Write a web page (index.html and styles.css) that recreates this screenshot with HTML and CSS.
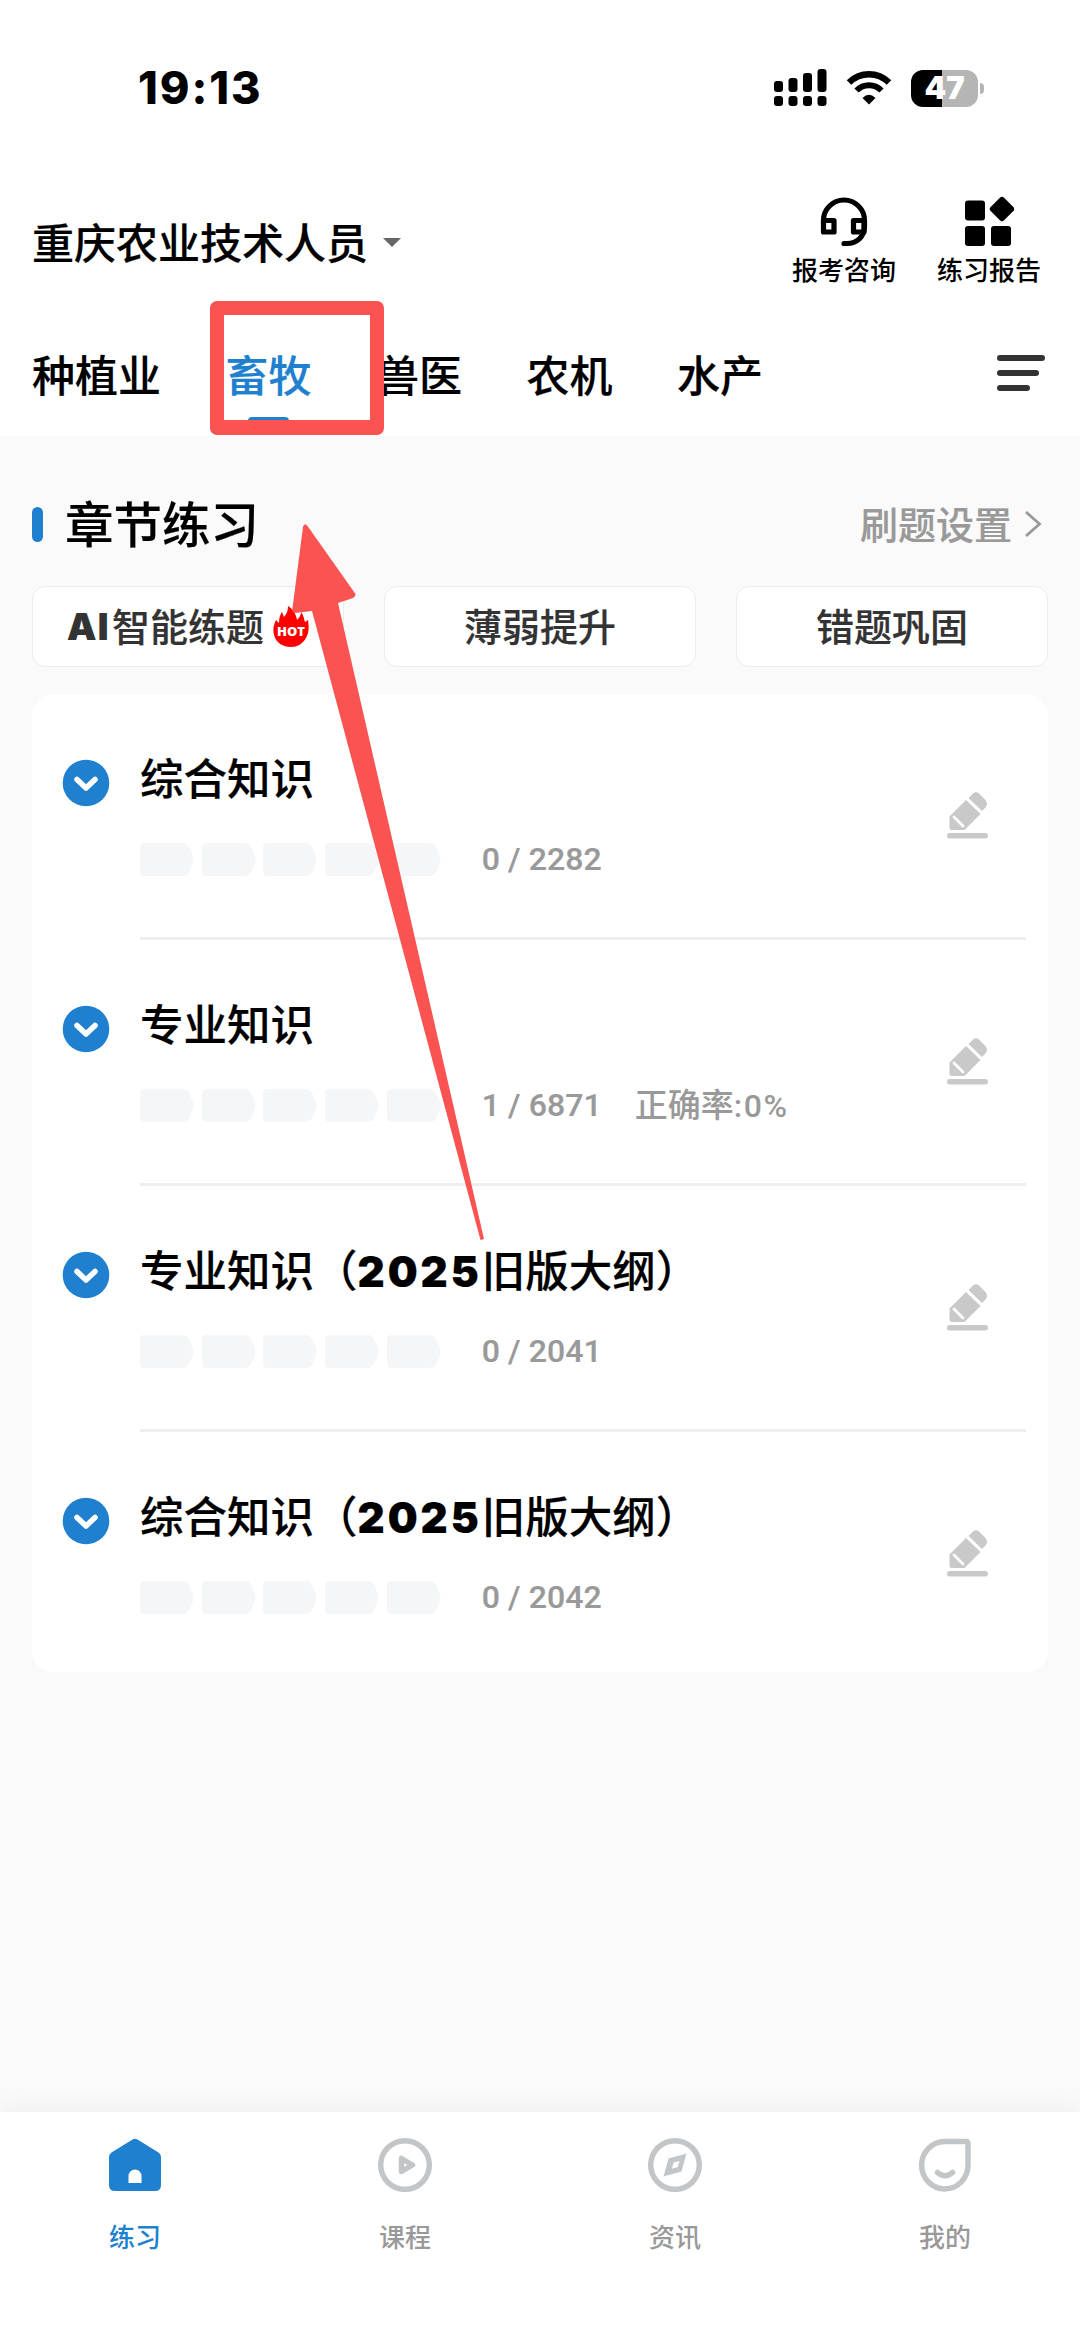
FILE: index.html
```html
<!DOCTYPE html>
<html lang="zh-CN">
<head>
    <meta charset="UTF-8">
    <title>章节练习</title>
    <link rel="stylesheet" href="styles.css">
</head>
<body>
    <div class="page">
        <header class="header">
            <div class="status-bar">
                <span class="time">19:13</span>
                <div class="status-icons">
                    <svg class="signal" width="54" height="38" viewBox="0 0 54 38">
                        <rect x="0" y="12" width="9" height="11" rx="3"/>
                        <rect x="14.5" y="9" width="9" height="14" rx="3"/>
                        <rect x="29" y="4" width="9" height="19" rx="3"/>
                        <rect x="43.5" y="0" width="9" height="23" rx="3"/>
                        <rect x="0" y="27" width="9" height="10" rx="3"/>
                        <rect x="14.5" y="27" width="9" height="10" rx="3"/>
                        <rect x="29" y="27" width="9" height="10" rx="3"/>
                        <rect x="43.5" y="27" width="9" height="10" rx="3"/>
                    </svg>
                    <svg class="wifi" width="46" height="36" viewBox="0 0 46 36">
                        <path d="M3 12.5C14.500 1.500 31.500 1.500 43 12.500" fill="none" stroke="#000" stroke-width="6.500"/>
                        <path d="M10.500 20.500C17.500 13.500 28.500 13.500 35.500 20.500" fill="none" stroke="#000" stroke-width="6"/>
                        <path d="M16.500 28Q23 21.500 29.500 28L23 34.500Z"/>
                    </svg>
                    <div class="battery"><span>47</span></div>
                    <div class="battery-tip"></div>
                </div>
            </div>

            <div class="title-bar">
                <div class="exam-name">重庆农业技术人员<i class="caret"></i></div>
                <div class="tools">
                    <div class="tool">
                        <svg width="50" height="52" viewBox="0 0 50 52" fill="none" stroke="#000">
                            <path d="M4.500 26V25.500a20.500 20.500 0 0 1 41 0V31c0 11-8 17.500-17.500 17.500H25" stroke-width="5.200" stroke-linecap="round"/>
                            <rect x="4.500" y="25.500" width="10.500" height="11.500" stroke-width="5.200" stroke-linejoin="round"/>
                            <rect x="34.500" y="25.500" width="10.500" height="11.500" stroke-width="5.200" stroke-linejoin="round"/>
                        </svg>
                        <span>报考咨询</span>
                    </div>
                    <div class="tool">
                        <svg width="50" height="52" viewBox="0 0 50 52">
                            <rect x="1" y="5.500" width="20" height="20" rx="3"/>
                            <rect x="1" y="31" width="20" height="20" rx="3"/>
                            <rect x="27" y="31" width="20" height="20" rx="3"/>
                            <rect x="28.500" y="4.500" width="19" height="19" rx="3" transform="rotate(45 38 14)"/>
                        </svg>
                        <span>练习报告</span>
                    </div>
                </div>
            </div>

            <nav class="tabs">
                <a class="tab">种植业</a>
                <a class="tab active">畜牧</a>
                <a class="tab">兽医</a>
                <a class="tab">农机</a>
                <a class="tab">水产</a>
                <div class="menu"><i></i><i></i><i></i></div>
            </nav>
        </header>

        <main class="content">
            <div class="section-head">
                <h2>章节练习</h2>
                <div class="settings"><span>刷题设置</span>
                    <svg width="18" height="28" viewBox="0 0 18 28" fill="none" stroke="#999" stroke-width="2.800"><path d="M2 2L15.500 14L2 26"/></svg>
                </div>
            </div>

            <div class="actions">
                <button class="action"><b>AI</b><span>智能练题</span>
                    <svg class="hot" width="36" height="42" viewBox="0 0 36 42">
                        <path d="M15 0C20 3 23 8 24 14C26 12 28 9 28 6C31 10 31 13 32 16L35 14C36 20 36 26 33.500 31C30 38 24 41 18 41C10 41 3 37 1 29C-.500 23 1 18 3 14L6 17C6 12 7 9 9 6L11 11C14 8 15 4 15 0Z" fill="#f00"/>
                        <text x="18" y="30">HOT</text>
                    </svg>
                </button>
                <button class="action"><span>薄弱提升</span></button>
                <button class="action"><span>错题巩固</span></button>
            </div>

            <div class="card" id="chapters"></div>
        </main>

        <footer class="tabbar">
            <a class="tabbar-item active">
                <svg width="56" height="56" viewBox="0 0 56 56"><path d="M25.500 2.500Q28 .800 30.500 2.500L51.500 15.500Q54 17 54 20V48Q54 54 48 54H8Q2 54 2 48V20Q2 17 4.500 15.500Z" fill="#2080d0"/><path d="M21.500 46V39a6.500 6.500 0 0 1 13 0V46Z" fill="#fff"/></svg>
                <span>练习</span>
            </a>
            <a class="tabbar-item">
                <svg width="56" height="56" viewBox="0 0 56 56" fill="none" stroke="#c3c6c9" stroke-width="5.500"><circle cx="28" cy="28" r="24.300"/><path d="M24.500 21.500V34.500L35.500 28Z" stroke-linejoin="round"/></svg>
                <span>课程</span>
            </a>
            <a class="tabbar-item">
                <svg width="56" height="56" viewBox="0 0 56 56" fill="none" stroke="#c3c6c9" stroke-width="5.500"><circle cx="28" cy="28" r="24.300"/><path d="M39.500 16.500L21.500 21.500L16.500 39.500L34.500 34.500ZM32.500 24L30.800 30L25 31.800L26.500 25.500Z" fill="#c3c6c9" fill-rule="evenodd" stroke="none"/></svg>
                <span>资讯</span>
            </a>
            <a class="tabbar-item">
                <svg width="56" height="56" viewBox="0 0 56 56" fill="none" stroke="#c3c6c9" stroke-width="5.500"><path d="M28 4.500H49Q51 4.500 51 6.500V28A23.200 23.700 0 1 1 28 4.500Z"/><path d="M20.500 35.500Q28 42 35.500 35.500" stroke-linecap="round"/></svg>
                <span>我的</span>
            </a>
        </footer>

        <!-- tap hint over the active tab -->
        <div class="hint-box"></div>
        <svg class="hint-arrow" width="200" height="730" viewBox="0 0 200 730">
            <path d="M13 12Q14.500 7 17.500 11L65.500 79Q66 81 63 83L48 88L194 724L190.500 725L22 96L5 98Q2 98 2.500 93Z" fill="#fb5252"/>
        </svg>
    </div>

    <script>
        const chapters = [
            { name: "综合知识", done: 0, total: 2282 },
            { name: "专业知识", done: 1, total: 6871, rate: "0%" },
            { name: "专业知识（<b>2025</b>旧版大纲）", done: 0, total: 2041 },
            { name: "综合知识（<b>2025</b>旧版大纲）", done: 0, total: 2042 }
        ];

        const bar = '<svg width="54" height="33" viewBox="0 0 54 33"><path d="M4 0H43Q47 0 49 4L53 13Q54 16.500 53 20L49 29Q47 33 43 33H4Q0 33 0 28V5Q0 0 4 0Z" fill="#f4f6f7"/></svg>';

        document.getElementById("chapters").innerHTML = chapters.map(c => `
            <div class="chapter">
                <svg class="toggle" width="48" height="48" viewBox="0 0 48 48"><circle cx="24" cy="24" r="23.300" fill="#2080d0"/><path d="M15 20.500L24 29L33 20.500" fill="none" stroke="#fff" stroke-width="5.500" stroke-linecap="round" stroke-linejoin="round"/></svg>
                <div class="chapter-body">
                    <div class="chapter-info">
                        <div class="chapter-name">${c.name}</div>
                        <div class="progress">
                            <div class="bars">${bar.repeat(5)}</div>
                            <span class="count">${c.done} / ${c.total}</span>
                            ${c.rate ? `<span class="rate">正确率<b>:${c.rate}</b></span>` : ""}
                        </div>
                    </div>
                    <svg class="pencil" width="42" height="50" viewBox="0 0 42 50" fill="#c9c9c9">
                        <path d="M21.500 7L26 2.500Q29 0 32 2.500L38.500 9Q41.500 13 38.500 16.500L35 20Z"/>
                        <path d="M19 9L33.500 23L17.500 39H5Q2.500 39 2.500 36.500V25.500Z"/>
                        <path d="M7 26L16 35" stroke="#fff" stroke-width="2.800" stroke-linecap="round"/>
                        <rect x="0" y="42" width="41" height="5.500" rx="2.700"/>
                    </svg>
                </div>
            </div>`).join("");
    </script>
</body>
</html>
```
FILE: styles.css
```css
* {
    box-sizing: border-box;
}

body {
    margin: 0;
    background-color: #fafafa;
    font-family: "Noto Sans CJK SC", sans-serif;
    font-weight: 500;
    color: #000;
}

svg {
    display: block;
    flex: none;
}

.page {
    position: relative;
    width: 1080px;
    height: 2348px;
    display: flex;
    flex-direction: column;
    overflow: hidden;
}

.header {
    height: 436px;
    flex: none;
    padding: 60px 32px 0;
    background-color: #fff;
}

/* status bar */
.status-bar {
    height: 56px;
    display: flex;
    align-items: center;
    justify-content: space-between;
    padding: 0 64px 0 106px;
}

.time {
    font-family: Inter, sans-serif;
    font-size: 45px;
    font-weight: 800;
    line-height: 54px;
    letter-spacing: 1.9px;
    margin-bottom: 1px;
}

.status-icons {
    display: flex;
    align-items: center;
}

.wifi {
    margin: 0 19px 0 18px;
}

.battery {
    width: 67px;
    height: 37px;
    border-radius: 12px;
    background: linear-gradient(to right, #000 47%, #b5b5b5 47%);
    color: #fff;
    font-family: Inter, sans-serif;
    font-size: 31px;
    font-weight: 900;
    line-height: 36px;
    text-align: center;
}

.battery-tip {
    width: 4px;
    height: 11px;
    margin-left: 2px;
    border-radius: 0 4px 4px 0;
    background-color: #b5b5b5;
}

/* exam title and shortcuts */
.title-bar {
    height: 204px;
    display: flex;
    justify-content: space-between;
    padding-top: 79px;
}

.exam-name {
    height: 92px;
    display: flex;
    align-items: center;
    font-size: 42px;
    line-height: 92px;
    -webkit-text-stroke: 0.2px;
}

.caret {
    margin: 2px 0 0 15px;
    border: 9.5px solid transparent;
    border-top-color: #666;
    border-bottom: 0;
}

.tools {
    display: flex;
    gap: 41px;
    margin-right: 7px;
}

.tool {
    display: flex;
    flex-direction: column;
    align-items: center;
    font-size: 26px;
    line-height: 40px;
}

.tool svg {
    margin-bottom: 2px;
}

/* subject tabs */
.tabs {
    height: 110px;
    display: flex;
    align-items: center;
    gap: 64.5px;
    font-size: 43px;
    -webkit-text-stroke: 0.2px;
}

.tab {
    height: 110px;
    line-height: 106px;
}

.tab.active {
    position: relative;
    color: #2080d0;
}

.tab.active::after {
    content: "";
    position: absolute;
    left: 22px;
    bottom: 5px;
    width: 41px;
    height: 8px;
    border-radius: 4px;
    background-color: #2080d0;
}

.menu {
    display: flex;
    flex-direction: column;
    gap: 9px;
    width: 48px;
    margin: 0 3px 4px auto;
}

.menu i {
    height: 6px;
    border-radius: 3px;
    background-color: #333;
}

.menu i:nth-child(2) {
    width: 42px;
}

.menu i:nth-child(3) {
    width: 33px;
}

/* content */
.content {
    flex: 1;
    padding: 36px 32px 0;
}

.section-head {
    height: 100px;
    display: flex;
    align-items: center;
    justify-content: space-between;
}

h2 {
    display: flex;
    align-items: center;
    margin: 0;
    font-size: 48.5px;
    font-weight: 500;
    line-height: 94px;
    -webkit-text-stroke: 0.2px;
}

h2::before {
    content: "";
    width: 11px;
    height: 35px;
    margin: 5px 22px 0 0;
    border-radius: 5.5px;
    background-color: #2080d0;
}

.settings {
    display: flex;
    align-items: center;
    gap: 12px;
    margin-right: 6px;
    color: #999;
    font-size: 38px;
    -webkit-text-stroke: 0.2px;
}

.settings svg {
    margin-top: 3px;
}

.actions {
    display: grid;
    grid-template-columns: repeat(3, 312px);
    gap: 40px;
    margin-top: 14px;
}

.action {
    height: 81px;
    display: flex;
    align-items: center;
    justify-content: center;
    padding: 0;
    border: 1.5px solid #ebebeb;
    border-radius: 13px;
    background-color: #fff;
    color: #333;
    font-family: inherit;
    font-size: 38px;
    font-weight: 500;
    -webkit-text-stroke: 0.2px;
}

.action span {
    padding-bottom: 4px;
}

.action b {
    font-family: Inter, sans-serif;
    font-size: 37px;
    font-weight: 900;
    letter-spacing: 1.5px;
    margin-right: 2px;
}

.hot {
    margin-left: 9px;
}

.hot text {
    fill: #fff;
    font-family: "Open Sans", sans-serif;
    font-size: 13px;
    font-weight: 800;
    text-anchor: middle;
    -webkit-text-stroke: 0;
}

/* chapter list */
.card {
    margin-top: 27px;
    border-radius: 22px;
    background-color: #fff;
}

.chapter {
    height: 246px;
    display: flex;
    padding: 0 22px 0 30px;
}

.chapter:last-child {
    height: 240px;
}

.toggle {
    margin: 65px 30px 0 0;
}

.chapter-body {
    flex: 1;
    display: flex;
    justify-content: space-between;
    border-bottom: 3px solid #eee;
}

.chapter:last-child .chapter-body {
    border-bottom: 0;
}

.chapter-name {
    height: 64px;
    margin-top: 51px;
    font-size: 43.5px;
    line-height: 63px;
    white-space: nowrap;
    -webkit-text-stroke: 0.2px;
}

.chapter-name b {
    font-family: Inter, sans-serif;
    font-size: 42px;
    font-weight: 900;
    line-height: 1;
    letter-spacing: 3px;
}

.progress {
    height: 40px;
    display: flex;
    align-items: center;
    margin-top: 30px;
    color: #999;
}

.bars {
    display: flex;
    gap: 7.7px;
}

.count {
    width: 121px;
    margin-left: 41px;
    font-family: Roboto, sans-serif;
    font-size: 32px;
    letter-spacing: 0.1px;
    white-space: nowrap;
    -webkit-text-stroke: 0.2px;
}

.rate {
    margin: 0 0 5px 32px;
    font-size: 33px;
}

.rate b {
    font-family: Roboto, sans-serif;
    font-size: 32px;
    font-weight: 500;
    letter-spacing: 1.5px;
}

.pencil {
    margin: 97px 37px 0 0;
}

/* bottom navigation */
.tabbar {
    height: 236px;
    flex: none;
    display: flex;
    background-color: #fff;
    box-shadow: 0 -4px 24px rgba(0, 0, 0, 0.05);
}

.tabbar-item {
    flex: 1;
    display: flex;
    flex-direction: column;
    align-items: center;
    padding-top: 25px;
    color: #999;
    font-size: 26px;
    line-height: 40px;
}

.tabbar-item svg {
    margin-bottom: 23px;
}

.tabbar-item.active {
    color: #2080d0;
}

/* hint overlay */
.hint-box {
    position: absolute;
    left: 210px;
    top: 301px;
    width: 174px;
    height: 134px;
    border: 14px solid #fb5252;
    border-bottom-width: 15px;
    border-radius: 7px;
}

.hint-arrow {
    position: absolute;
    left: 290px;
    top: 515px;
}
```
